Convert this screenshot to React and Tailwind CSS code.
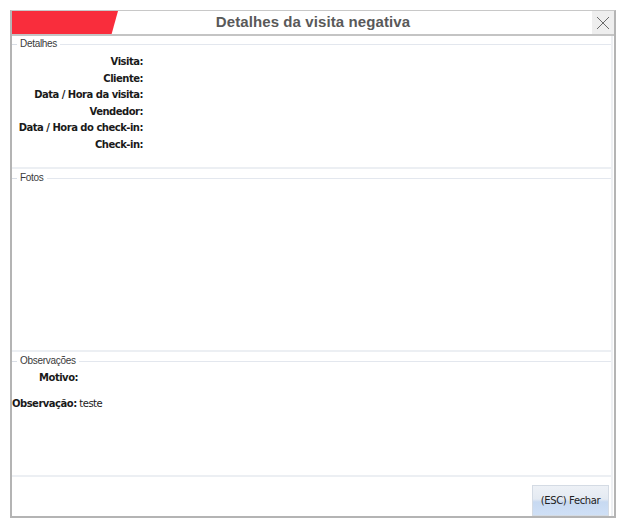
const labels = [
  "Visita:",
  "Cliente:",
  "Data / Hora da visita:",
  "Vendedor:",
  "Data / Hora do check-in:",
  "Check-in:",
];

const Legend = ({ text }) => (
  <div className="flex items-center h-[12px]">
    <div className="w-[5px] h-px bg-[#d9dee6]" />
    <span className="px-[3px] text-[10px] leading-none text-[#3a3a3a] tracking-[-0.3px]">
      {text}
    </span>
    <div className="flex-1 h-px bg-[#e3e7ee]" />
  </div>
);

export default function App() {
  return (
    <div className="w-[622px] h-[526px] bg-white font-['Liberation_Sans',sans-serif] pt-[10px] pl-[10px]">
      <div className="w-[606px] h-[508px] flex flex-col border-l-2 border-t border-r-2 border-b-2 border-t-[#c8c8c8] border-l-[#b4b4b4] border-r-[#b4b4b4] border-b-[#b4b4b4] bg-white">
        {/* header */}
        <div className="grid grid-cols-[106px_1fr_106px] h-[25px] border-b-2 border-[#c4c4c4]">
          <div className="bg-[#f92d3c] [clip-path:polygon(0_0,100%_0,94%_100%,0_100%)]" />
          <div className="flex items-center justify-center text-[15px] font-bold text-[#595959] tracking-[0.1px]">
            Detalhes da visita negativa
          </div>
          <div className="flex justify-end">
            <button className="w-[22px] h-full bg-[#eeeeee] flex items-center justify-center">
              <svg width="14" height="14" viewBox="0 0 14 14">
                <path d="M1 1 L13 13 M13 1 L1 13" stroke="#6a6a6a" strokeWidth="1" />
              </svg>
            </button>
          </div>
        </div>

        <div className="flex-1 flex flex-col border-r-2 border-[#eef0f3] mr-[1px]">
          {/* Detalhes */}
          <div className="h-[133px] pt-[2px] border-b-2 border-[#eceff3] flex flex-col">
            <Legend text="Detalhes" />
            <div className="pt-[4px] w-[131px] flex flex-col items-end font-['DejaVu_Sans',sans-serif] font-bold text-[10px] text-[#1a1a1a]">
              {labels.map((l) => (
                <div key={l} className="h-[16.6px] leading-[16.6px] tracking-[-0.5px] whitespace-nowrap">
                  {l}
                </div>
              ))}
            </div>
          </div>

          {/* Fotos */}
          <div className="h-[183px] pt-[3px] border-b-2 border-[#eceff3]">
            <Legend text="Fotos" />
          </div>

          {/* Observações */}
          <div className="h-[125px] pt-[3px] border-b-2 border-[#eceff3] flex flex-col">
            <Legend text="Observações" />
            <div className="font-['DejaVu_Sans',sans-serif] text-[10px] text-[#1a1a1a] tracking-[-0.5px]">
              <div className="w-[66px] text-right font-bold h-[16px] leading-[16px] mt-[3px]">Motivo:</div>
              <div className="h-[16px] leading-[16px] mt-[10px] whitespace-nowrap">
                <span className="font-bold">Observação:</span>{" "}
                <span>teste</span>
              </div>
            </div>
          </div>

          {/* footer */}
          <div className="flex-1 flex justify-end items-end pr-[2px]">
            <button className="w-[77px] h-[31px] border border-[#d4dbe4] bg-[linear-gradient(#edf1f6_0%,#e4eaf2_45%,#c7d9f1_55%,#cfe0f6_100%)] font-['DejaVu_Sans',sans-serif] text-[10px] tracking-[-0.4px] text-[#222]">
              (ESC) Fechar
            </button>
          </div>
        </div>
      </div>
    </div>
  );
}
